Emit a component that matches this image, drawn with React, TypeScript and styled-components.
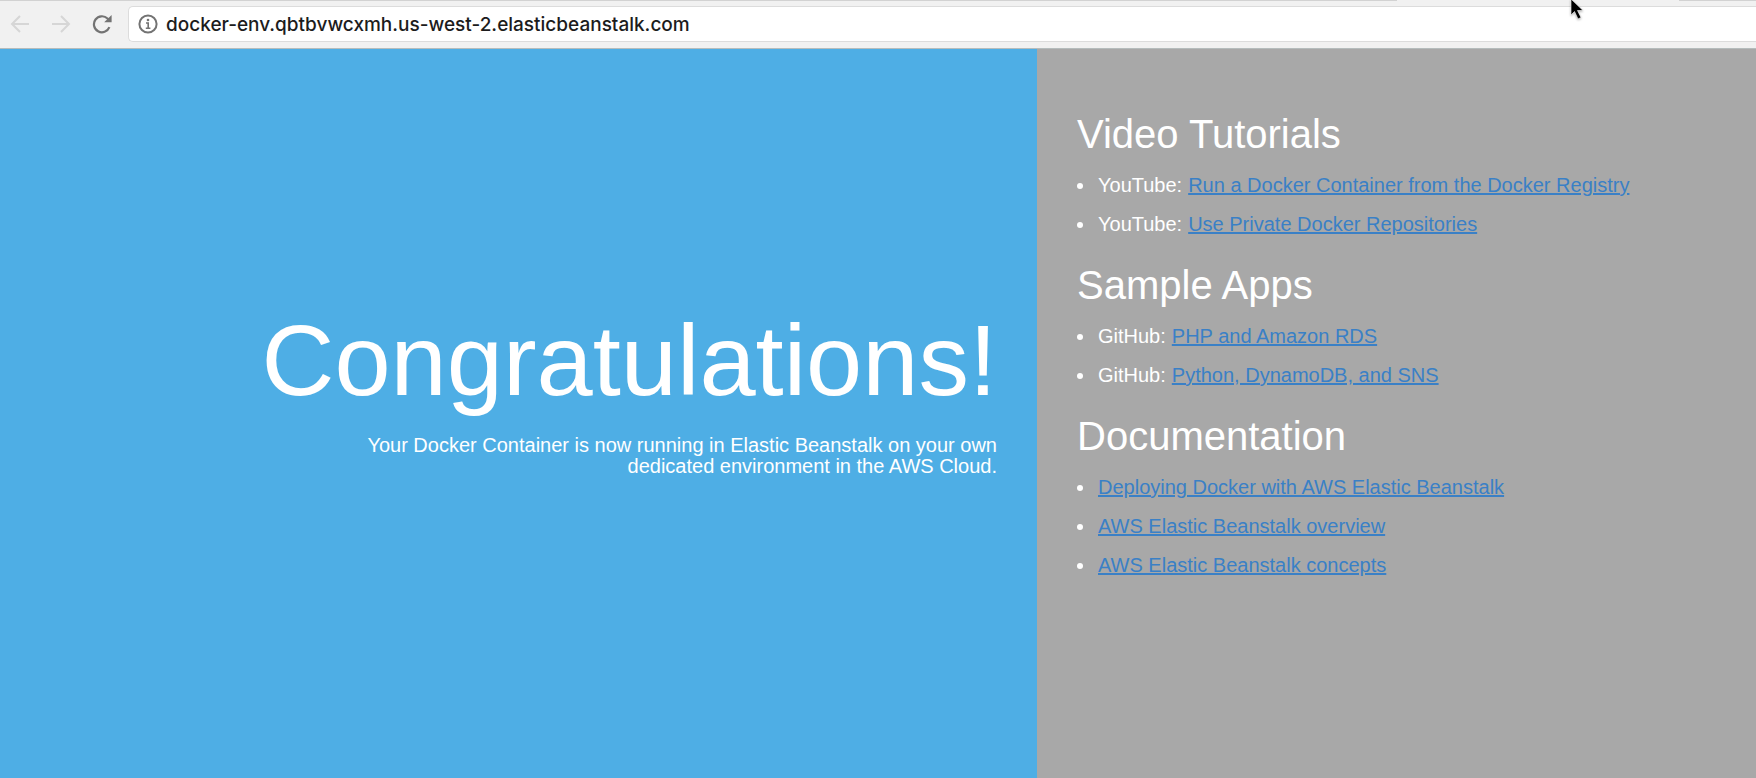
import React from "react";
import styled, { createGlobalStyle } from "styled-components";

const GlobalStyle = createGlobalStyle`
  * { box-sizing: border-box; }
  body { margin: 0; font-family: "Liberation Sans", Arial, sans-serif; font-size: 20px; color: #fff; }
  h1, h2, p, ul { margin: 0; padding: 0; font-weight: 400; }
`;

const Page = styled.div`
  display: flex;
  flex-direction: column;
  min-height: 100vh;
`;

const BrowserBar = styled.header`
  position: relative;
  background: #f1f1f1;
  border-bottom: 1px solid #b5bcbc;
`;

const TabEdge = styled.div`
  display: grid;
  grid-template-columns: 1397fr 282fr 77fr;
  height: 1px;
`;

const TabLine = styled.span<{ $open?: boolean }>`
  background: ${(p) => (p.$open ? "#f1f1f1" : "#d2d2d2")};
`;

const Toolbar = styled.nav`
  display: flex;
  align-items: center;
  gap: 1px;
  padding: 5px 0 6px;
`;

const NavButton = styled.button<{ $muted?: boolean }>`
  display: flex;
  align-items: center;
  justify-content: center;
  width: 40px;
  height: 36px;
  padding: 0;
  border: 0;
  background: none;
  color: ${(p) => (p.$muted ? "#d6d6d6" : "#737373")};
`;

const AddressBox = styled.label`
  display: flex;
  flex: 1;
  align-items: center;
  gap: 8px;
  height: 36px;
  margin-left: 5px;
  padding-left: 9px;
  background: #fff;
  border: 1px solid #dcdcdc;
  border-right: 0;
  border-radius: 5px 0 0 5px;
  color: #737373;
`;

const AddressInput = styled.input`
  flex: 1;
  min-width: 0;
  height: 32px;
  padding: 0;
  border: 0;
  outline: 0;
  background: none;
  color: #1c1c1c;
  font: 500 19px Inter, sans-serif;
`;

const Pointer = styled.svg`
  position: absolute;
  top: -2px;
  left: 89.4%;
  filter: drop-shadow(0 1px 1px rgba(0, 0, 0, 0.3));
`;

const Columns = styled.main`
  display: grid;
  grid-template-columns: 1037fr 719fr;
  flex: 1;
`;

const Welcome = styled.section`
  display: flex;
  flex-direction: column;
  align-items: flex-end;
  justify-content: center;
  gap: 24px;
  padding: 0 40px 42px;
  background: #4eaee5;
  text-align: right;
`;

const Title = styled.h1`
  font-size: 101px;
  line-height: 102px;
`;

const Message = styled.p`
  max-width: 680px;
  line-height: 21px;
`;

const Resources = styled.aside`
  display: flex;
  flex-direction: column;
  gap: 19px;
  padding: 63px 40px;
  background: #a8a8a8;
`;

const Heading = styled.h2`
  margin-bottom: 10px;
  font-size: 40px;
  line-height: 44px;
`;

const LinkList = styled.ul`
  list-style: none;
`;

const LinkItem = styled.li`
  display: flex;
  align-items: center;
  line-height: 39px;

  &::before {
    content: "";
    width: 6px;
    height: 6px;
    margin: 1px 15px 0 0;
    border-radius: 50%;
    background: #fff;
  }
`;

const Source = styled.span`
  margin-right: 6px;
`;

const DocLink = styled.a`
  color: #3a80c6;
  text-decoration: underline;
`;

type Entry = { source?: string; label: string };

const groups: { title: string; entries: Entry[] }[] = [
  {
    title: "Video Tutorials",
    entries: [
      { source: "YouTube:", label: "Run a Docker Container from the Docker Registry" },
      { source: "YouTube:", label: "Use Private Docker Repositories" },
    ],
  },
  {
    title: "Sample Apps",
    entries: [
      { source: "GitHub:", label: "PHP and Amazon RDS" },
      { source: "GitHub:", label: "Python, DynamoDB, and SNS" },
    ],
  },
  {
    title: "Documentation",
    entries: [
      { label: "Deploying Docker with AWS Elastic Beanstalk" },
      { label: "AWS Elastic Beanstalk overview" },
      { label: "AWS Elastic Beanstalk concepts" },
    ],
  },
];

const Arrow = ({ forward }: { forward?: boolean }) => (
  <svg width="20" height="18" viewBox="0 0 20 18" fill="none" stroke="currentColor" strokeWidth="2">
    <path d={forward ? "M1 9H18M10 1L18 9L10 17" : "M19 9H2M10 1L2 9L10 17"} />
  </svg>
);

const Reload = () => (
  <svg width="20" height="20" viewBox="0 0 20 20" fill="none" stroke="currentColor" strokeWidth="2.2">
    <path d="M17.4 13.2A8 8 0 1 1 15.5 4.5L17 6" />
    <path d="M19.6 1V8.2H12.2Z" fill="currentColor" stroke="none" />
  </svg>
);

const Info = () => (
  <svg width="20" height="20" viewBox="0 0 20 20" fill="none" stroke="currentColor" strokeWidth="2">
    <circle cx="10" cy="10" r="8.6" />
    <path d="M8 9H10.2V14M7.8 14.2H12.4" strokeWidth="1.6" />
    <circle cx="10" cy="6" r="1.3" fill="currentColor" stroke="none" />
  </svg>
);

export default function App() {
  return (
    <Page>
      <GlobalStyle />
      <BrowserBar>
        <TabEdge>
          <TabLine />
          <TabLine $open />
          <TabLine />
        </TabEdge>
        <Toolbar>
          <NavButton $muted aria-label="Back"><Arrow /></NavButton>
          <NavButton $muted aria-label="Forward"><Arrow forward /></NavButton>
          <NavButton aria-label="Reload"><Reload /></NavButton>
          <AddressBox>
            <Info />
            <AddressInput aria-label="Address" defaultValue="docker-env.qbtbvwcxmh.us-west-2.elasticbeanstalk.com" />
          </AddressBox>
        </Toolbar>
        <Pointer width="16" height="26" viewBox="0 0 16 26" aria-hidden="true">
          <path d="M1 1V17L4.5 13.5L8 21L11 19.5L7.5 12.5H13Z" fill="#000" stroke="#fff" strokeWidth="0.6" />
        </Pointer>
      </BrowserBar>
      <Columns>
        <Welcome>
          <Title>Congratulations!</Title>
          <Message>
            Your Docker Container is now running in Elastic Beanstalk on your own dedicated environment in the AWS Cloud.
          </Message>
        </Welcome>
        <Resources>
          {groups.map((group) => (
            <section key={group.title}>
              <Heading>{group.title}</Heading>
              <LinkList>
                {group.entries.map((entry) => (
                  <LinkItem key={entry.label}>
                    {entry.source && <Source>{entry.source}</Source>}
                    <DocLink href="#">{entry.label}</DocLink>
                  </LinkItem>
                ))}
              </LinkList>
            </section>
          ))}
        </Resources>
      </Columns>
    </Page>
  );
}
